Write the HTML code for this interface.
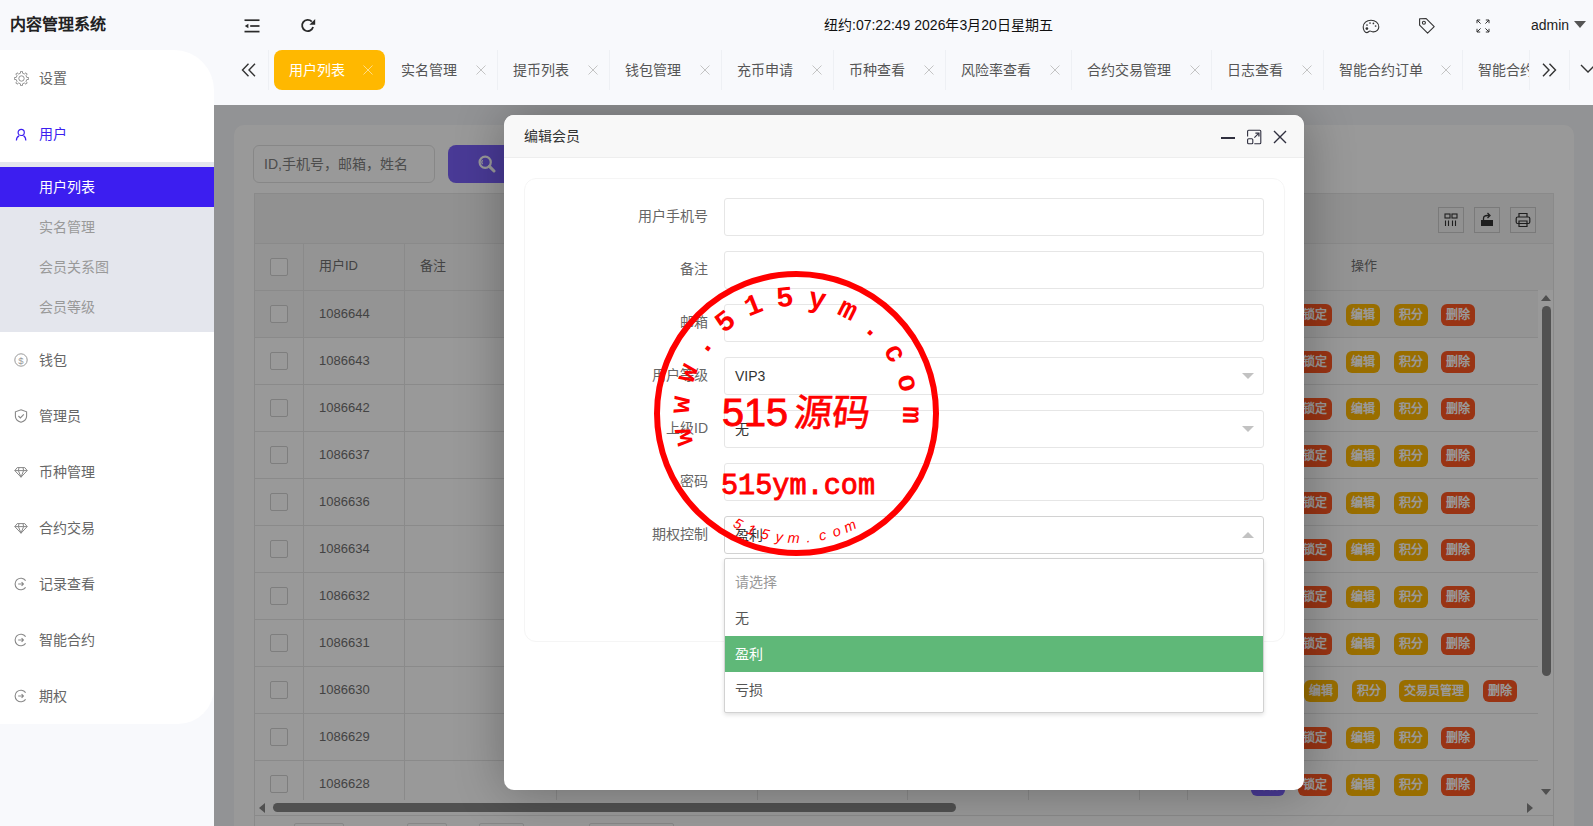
<!DOCTYPE html>
<html lang="zh-CN"><head><meta charset="utf-8">
<style>
*{margin:0;padding:0;box-sizing:border-box}
html,body{width:1593px;height:826px;overflow:hidden}
body{position:relative;background:#f8f9fc;font-family:"Liberation Sans",sans-serif;font-size:14px;color:#333}
.abs{position:absolute}
/* header */
#logo{left:10px;top:14.5px;font-size:16px;font-weight:bold;color:#222;line-height:20px;white-space:nowrap}
#date{left:824px;top:15px;line-height:20px;color:#111;white-space:nowrap}
#admin{left:1531px;top:15px;line-height:20px;color:#222}
/* sidebar */
#side{left:0;top:50px;width:214px;height:674px;background:#fff;border-radius:0 40px 36px 0}
.mi{position:absolute;left:0;width:214px;height:56px;line-height:56px;color:#666;white-space:nowrap}
.mi span{position:absolute;left:39px;top:0}
.mi svg{position:absolute;left:14px;top:21px}
#sub{position:absolute;left:0;top:112px;width:214px;height:170px;background:#e4e6ed}
.si{position:absolute;left:0;width:214px;height:40px;line-height:40px;color:#999;padding-left:39px;white-space:nowrap}
.si.on{background:#3c1ef0;color:#fff}
/* tabs */
.tab{position:absolute;top:50px;height:40px;line-height:40px;color:#555;white-space:nowrap}
.tab .t{position:absolute;left:15px;top:0}
.tab .x{position:absolute;right:12px;top:15px;color:#c4c4c4}
.tab .sep{position:absolute;right:0;top:0;width:1px;height:40px;background:#eef0f4}
.tab.on{background:#ffb800;color:#fff;border-radius:8px}
.tab.on .x{color:#ffdc85}

#frame{position:absolute;left:0;top:0;width:1593px;height:826px;clip-path:inset(105px 0 0 214px);background:transparent}
#fbg{left:214px;top:105px;width:1379px;height:721px;background:#f4f5f8}
#card{left:234px;top:125px;width:1340px;height:760px;background:#fff;border-radius:10px}
#sinput{left:253px;top:145px;width:182px;height:38px;border:1px solid #e2e2e2;border-radius:6px;color:#808080;padding-left:10px;line-height:36px;white-space:nowrap}
#sbtn{left:448px;top:145px;width:78px;height:38px;background:#7b62fb;border-radius:8px}
.tb{position:absolute;border:1px solid #e6e6e6}
.row{position:absolute;left:255px;width:1283px;height:47px;border-top:1px solid #e6e6e6}
.cb{position:absolute;left:270px;width:18px;height:18px;border:1px solid #d2d2d2;border-radius:2px;background:#fff}
.id{position:absolute;left:319px;font-size:13px;color:#707070;line-height:22px}
.vl{position:absolute;width:1px;background:#e6e6e6}
.ab{position:absolute;height:22px;line-height:22px;border-radius:6px;color:#fff;font-size:12px;font-weight:bold;text-align:center;white-space:nowrap}
.ab.r{background:#ff5722}.ab.y{background:#ffb800}.ab.p{background:#7b62fb}
#shade{left:214px;top:105px;width:1379px;height:721px;background:rgba(0,0,0,.4)}

#modal{left:504px;top:115px;width:800px;height:675px;background:#fff;border-radius:10px;box-shadow:1px 1px 50px rgba(0,0,0,.3);overflow:hidden}
#mtitle{position:absolute;left:0;top:0;width:800px;height:43px;background:#f8f8f8;border-bottom:1px solid #eee;line-height:42px;padding-left:20px;color:#333}
#fcard{position:absolute;left:20px;top:63px;width:761px;height:464px;border:1px solid #f5f5f5;border-radius:12px}
.lab{position:absolute;width:200px;left:508px;text-align:right;color:#666;line-height:20px;white-space:nowrap}
.inp{position:absolute;left:724px;width:540px;height:38px;border:1px solid #e6e6e6;border-radius:3px;background:#fff;line-height:36px;padding-left:10px;color:#333}
.arr{position:absolute;left:1242px;width:12px;height:6px}
#dd{left:724px;top:558px;width:540px;height:155px;border:1px solid #d2d2d2;border-radius:2px;background:#fff;box-shadow:0 2px 4px rgba(0,0,0,.12);padding-top:5px}
.op{height:36px;line-height:36px;padding-left:10px;color:#555;white-space:nowrap}
</style></head>
<body>
<!-- HEADER -->
<div id="logo" class="abs">内容管理系统</div>
<svg class="abs" style="left:244px;top:19px" width="16" height="14" viewBox="0 0 16 14"><g stroke="#2a2a2a" stroke-width="1.7"><line x1="0.5" y1="1.2" x2="15.5" y2="1.2"/><line x1="6.2" y1="7" x2="15.5" y2="7"/><line x1="0.5" y1="12.6" x2="15.5" y2="12.6"/></g><path d="M0.8 7 L4.4 4.7 L4.4 9.3Z" fill="#2a2a2a"/></svg>
<svg class="abs" style="left:300px;top:18px" width="16" height="16" viewBox="0 0 16 16"><path d="M13.1 9A5.6 5.6 0 1 1 11.8 3.6" fill="none" stroke="#2a2a2a" stroke-width="1.8"/><path d="M15.2 1 L15.2 6.8 L9.4 6.8Z" fill="#2a2a2a"/></svg>
<div id="date" class="abs">纽约:07:22:49 2026年3月20日星期五</div>

<svg class="abs" style="left:1362px;top:19px" width="18" height="15" viewBox="0 0 18 15"><path d="M9 1.2C4.6 1.2 1.2 4.2 1.2 8c0 3.2 1.8 5.6 3.6 5.6 1.6 0 1.9-1.6 3.2-1.6 1.1 0 1.6 0.9 3.3 0.9 3.3 0 5.5-2.4 5.5-4.9C16.8 4.2 13.4 1.2 9 1.2z" fill="none" stroke="#333" stroke-width="1.1"/><circle cx="4.9" cy="9.6" r="1.35" fill="#333"/><circle cx="5" cy="6" r="0.85" fill="#333"/><circle cx="8" cy="4" r="0.85" fill="#333"/><circle cx="11.4" cy="4.4" r="0.85" fill="#333"/><circle cx="13.6" cy="7" r="0.85" fill="#333"/></svg>
<svg class="abs" style="left:1418px;top:17px" width="18" height="18" viewBox="0 0 18 18"><path d="M1.6 1.8 L8.2 1.6 L16.2 9.6 L9.6 16.2 L1.6 8.2Z" fill="none" stroke="#333" stroke-width="1.1" stroke-linejoin="round"/><circle cx="5.9" cy="5.8" r="1.5" fill="none" stroke="#333" stroke-width="1.1"/></svg>
<svg class="abs" style="left:1476px;top:19px" width="14" height="14" viewBox="0 0 14 14"><g fill="none" stroke="#333" stroke-width="1"><path d="M1 4.2V1h3.2M1 1l3.6 3.6"/><path d="M13 4.2V1H9.8M13 1L9.4 4.6"/><path d="M1 9.8V13h3.2M1 13l3.6-3.6"/><path d="M13 9.8V13H9.8M13 13L9.4 9.4"/></g></svg>
<div id="admin" class="abs">admin</div>
<svg class="abs" style="left:1574px;top:21px" width="12" height="7" viewBox="0 0 12 7"><path d="M0 0H12L6 7Z" fill="#555"/></svg>

<!-- SIDEBAR -->
<div id="side" class="abs">
  <div class="mi" style="top:0"><svg width="15" height="15" viewBox="0 0 14.5 14.5" style="left:14px;top:21px"><path d="M6.19 2.16 L6.39 0.30 L8.11 0.30 L8.31 2.16 L10.10 2.90 L11.55 1.73 L12.77 2.95 L11.60 4.40 L12.34 6.19 L14.20 6.39 L14.20 8.11 L12.34 8.31 L11.60 10.10 L12.77 11.55 L11.55 12.77 L10.10 11.60 L8.31 12.34 L8.11 14.20 L6.39 14.20 L6.19 12.34 L4.40 11.60 L2.95 12.77 L1.73 11.55 L2.90 10.10 L2.16 8.31 L0.30 8.11 L0.30 6.39 L2.16 6.19 L2.90 4.40 L1.73 2.95 L2.95 1.73 L4.40 2.90Z" fill="none" stroke="#8a8a8a" stroke-width="0.9" stroke-linejoin="round"/><circle cx="7.25" cy="7.25" r="2.6" fill="none" stroke="#8a8a8a" stroke-width="0.9"/></svg><span>设置</span></div>
  <div class="mi" style="top:56px;color:#3c1ef0"><svg width="14" height="14" viewBox="0 0 14 14" style="left:15px;top:22px"><circle cx="6.2" cy="4.4" r="3.1" fill="none" stroke="#3c1ef0" stroke-width="1.2"/><path d="M1.4 12.6C1.4 10.4 2.4 8.7 4.1 7.9M8.6 7.9C9.8 8.5 10.8 10.3 10.8 12.6" fill="none" stroke="#3c1ef0" stroke-width="1.2"/></svg><span>用户</span></div>
  <div id="sub">
    <div class="si on" style="top:5px">用户列表</div>
    <div class="si" style="top:45px">实名管理</div>
    <div class="si" style="top:85px">会员关系图</div>
    <div class="si" style="top:125px">会员等级</div>
  </div>
  <div class="mi" style="top:282px"><svg width="14" height="14" viewBox="0 0 14 14"><circle cx="7" cy="7" r="6.2" fill="none" stroke="#999" stroke-width="1"/><text x="7" y="10.6" font-size="9.5" text-anchor="middle" fill="#999" font-family="Liberation Sans">$</text></svg><span>钱包</span></div>
  <div class="mi" style="top:338px"><svg width="14" height="14" viewBox="0 0 14 14"><path d="M7 0.8L12.6 2.8V7.2C12.6 10 10.2 12.2 7 13.3 3.8 12.2 1.4 10 1.4 7.2V2.8Z" fill="none" stroke="#888" stroke-width="1.1"/><path d="M4.4 7l2 2 3.4-3.6" fill="none" stroke="#888" stroke-width="1.1"/></svg><span>管理员</span></div>
  <div class="mi" style="top:394px"><svg width="14" height="14" viewBox="0 0 14 14"><path d="M3.2 2.6H10.8L13.2 5.6L7 12.2L.8 5.6Z M.8 5.6H13.2 M5 2.6L4.4 5.6L7 12.2L9.6 5.6L9 2.6" fill="none" stroke="#888" stroke-width="1" stroke-linejoin="round"/></svg><span>币种管理</span></div>
  <div class="mi" style="top:450px"><svg width="14" height="14" viewBox="0 0 14 14"><path d="M3.2 2.6H10.8L13.2 5.6L7 12.2L.8 5.6Z M.8 5.6H13.2 M5 2.6L4.4 5.6L7 12.2L9.6 5.6L9 2.6" fill="none" stroke="#888" stroke-width="1" stroke-linejoin="round"/></svg><span>合约交易</span></div>
  <div class="mi" style="top:506px"><svg width="14" height="14" viewBox="0 0 14 14"><path d="M11.6 3.6A5.8 5.8 0 1 0 11.6 10.4" fill="none" stroke="#888" stroke-width="1.1"/><path d="M4.2 7H9.4M7.6 5.2L9.4 7L7.6 8.8" fill="none" stroke="#888" stroke-width="1.1"/></svg><span>记录查看</span></div>
  <div class="mi" style="top:562px"><svg width="14" height="14" viewBox="0 0 14 14"><path d="M11.6 3.6A5.8 5.8 0 1 0 11.6 10.4" fill="none" stroke="#888" stroke-width="1.1"/><path d="M4.2 7H9.4M7.6 5.2L9.4 7L7.6 8.8" fill="none" stroke="#888" stroke-width="1.1"/></svg><span>智能合约</span></div>
  <div class="mi" style="top:618px"><svg width="14" height="14" viewBox="0 0 14 14"><path d="M11.6 3.6A5.8 5.8 0 1 0 11.6 10.4" fill="none" stroke="#888" stroke-width="1.1"/><path d="M4.2 7H9.4M7.6 5.2L9.4 7L7.6 8.8" fill="none" stroke="#888" stroke-width="1.1"/></svg><span>期权</span></div>
</div>

<!-- TABS -->
<svg class="abs" style="left:241px;top:63px" width="16" height="14" viewBox="0 0 16 14"><path d="M7.5 0.8L1.5 7L7.5 13.2M14 0.8L8 7L14 13.2" fill="none" stroke="#333" stroke-width="1.4"/></svg>
<div class="abs" style="left:268px;top:50px;width:1px;height:40px;background:#eef0f4"></div>
<div class="tab on" style="left:274px;width:111px"><span class="t">用户列表</span><svg class="x" width="10" height="10" viewBox="0 0 10 10"><path d="M0.5 0.5L9.5 9.5M9.5 0.5L0.5 9.5" stroke="currentColor" stroke-width="1"/></svg></div>
<div class="tab" style="left:386px;width:112px"><span class="t">实名管理</span><svg class="x" width="10" height="10" viewBox="0 0 10 10"><path d="M0.5 0.5L9.5 9.5M9.5 0.5L0.5 9.5" stroke="currentColor" stroke-width="1"/></svg><i class="sep"></i></div>
<div class="tab" style="left:498px;width:112px"><span class="t">提币列表</span><svg class="x" width="10" height="10" viewBox="0 0 10 10"><path d="M0.5 0.5L9.5 9.5M9.5 0.5L0.5 9.5" stroke="currentColor" stroke-width="1"/></svg><i class="sep"></i></div>
<div class="tab" style="left:610px;width:112px"><span class="t">钱包管理</span><svg class="x" width="10" height="10" viewBox="0 0 10 10"><path d="M0.5 0.5L9.5 9.5M9.5 0.5L0.5 9.5" stroke="currentColor" stroke-width="1"/></svg><i class="sep"></i></div>
<div class="tab" style="left:722px;width:112px"><span class="t">充币申请</span><svg class="x" width="10" height="10" viewBox="0 0 10 10"><path d="M0.5 0.5L9.5 9.5M9.5 0.5L0.5 9.5" stroke="currentColor" stroke-width="1"/></svg><i class="sep"></i></div>
<div class="tab" style="left:834px;width:112px"><span class="t">币种查看</span><svg class="x" width="10" height="10" viewBox="0 0 10 10"><path d="M0.5 0.5L9.5 9.5M9.5 0.5L0.5 9.5" stroke="currentColor" stroke-width="1"/></svg><i class="sep"></i></div>
<div class="tab" style="left:946px;width:126px"><span class="t">风险率查看</span><svg class="x" width="10" height="10" viewBox="0 0 10 10"><path d="M0.5 0.5L9.5 9.5M9.5 0.5L0.5 9.5" stroke="currentColor" stroke-width="1"/></svg><i class="sep"></i></div>
<div class="tab" style="left:1072px;width:140px"><span class="t">合约交易管理</span><svg class="x" width="10" height="10" viewBox="0 0 10 10"><path d="M0.5 0.5L9.5 9.5M9.5 0.5L0.5 9.5" stroke="currentColor" stroke-width="1"/></svg><i class="sep"></i></div>
<div class="tab" style="left:1212px;width:112px"><span class="t">日志查看</span><svg class="x" width="10" height="10" viewBox="0 0 10 10"><path d="M0.5 0.5L9.5 9.5M9.5 0.5L0.5 9.5" stroke="currentColor" stroke-width="1"/></svg><i class="sep"></i></div>
<div class="tab" style="left:1324px;width:139px"><span class="t">智能合约订单</span><svg class="x" width="10" height="10" viewBox="0 0 10 10"><path d="M0.5 0.5L9.5 9.5M9.5 0.5L0.5 9.5" stroke="currentColor" stroke-width="1"/></svg><i class="sep"></i></div>
<div class="tab" style="left:1463px;width:67px;overflow:hidden"><span class="t">智能合约交易</span><i class="sep"></i></div>
<svg class="abs" style="left:1541px;top:63px" width="16" height="14" viewBox="0 0 16 14"><path d="M2 0.8L8 7L2 13.2M8.5 0.8L14.5 7L8.5 13.2" fill="none" stroke="#333" stroke-width="1.4"/></svg>
<div class="abs" style="left:1569px;top:50px;width:1px;height:40px;background:#eef0f4"></div>
<svg class="abs" style="left:1580px;top:64px" width="16" height="10" viewBox="0 0 16 10"><path d="M1 1L8 8L15 1" fill="none" stroke="#333" stroke-width="1.4"/></svg>

<div id="frame">
<div id="fbg" class="abs"></div>
<div id="card" class="abs"></div>
<div id="sinput" class="abs">ID,手机号，邮箱，姓名</div>
<div id="sbtn" class="abs"><svg style="position:absolute;left:30px;top:10px" width="18" height="18" viewBox="0 0 18 18"><circle cx="7.2" cy="7.2" r="5.6" fill="none" stroke="#fff" stroke-width="2.2"/><path d="M11.4 11.4L16 16" stroke="#fff" stroke-width="3" stroke-linecap="round"/><path d="M4.6 5.2A3 3 0 0 0 4.6 9.2" fill="none" stroke="#fff" stroke-width="1.1"/></svg></div>
<div class="abs" style="left:254px;top:193px;width:1300px;height:640px;border:1px solid #e6e6e6;background:#fff"></div>
<div class="abs" style="left:255px;top:194px;width:1298px;height:49px;background:#f2f2f2"></div>
<div class="abs" style="left:255px;top:243px;width:1298px;height:47px;background:#f7f7f7;border-top:1px solid #e6e6e6"></div>
<div class="abs" style="left:1438px;top:207px;width:26px;height:26px;border:1px solid #ccc"></div>
<div class="abs" style="left:1474px;top:207px;width:26px;height:26px;border:1px solid #ccc"></div>
<div class="abs" style="left:1510px;top:207px;width:26px;height:26px;border:1px solid #ccc"></div>
<svg class="abs" style="left:1444px;top:213px" width="14" height="14" viewBox="0 0 14 14"><g fill="none" stroke="#333" stroke-width="1.1"><rect x="1" y="1" width="5" height="4"/><rect x="8" y="1" width="5" height="4"/><path d="M1.5 7.5V13M4.5 7.5V13M8.5 7.5V13M11.5 7.5V13"/></g></svg>
<svg class="abs" style="left:1480px;top:212px" width="14" height="15" viewBox="0 0 14 15"><path d="M1 8H13V14H1Z" fill="#333"/><path d="M3.5 8V6.5C3.5 4.5 5 3.5 7.5 3.5H9M7.5 1L10 3.5L7.5 6" fill="none" stroke="#333" stroke-width="1.3"/></svg>
<svg class="abs" style="left:1515px;top:212px" width="16" height="16" viewBox="0 0 16 16"><g fill="none" stroke="#333" stroke-width="1.2"><path d="M4 5V1.5H12V5"/><rect x="1.2" y="5" width="13.6" height="6.5" rx="1.5"/><path d="M4 9H12V14.5H4Z"/></g></svg>
<div class="cb abs" style="top:258px"></div>
<div class="id" style="top:255px">用户ID</div>
<div class="id" style="left:420px;top:255px">备注</div>
<div class="id" style="left:1351px;top:255px">操作</div>
<div class="row" style="top:290px;background:#f7f7f7"></div>
<div class="cb" style="top:305px"></div>
<div class="id" style="top:303px">1086644</div>
<div class="ab p" style="left:1251px;top:304px;width:34px">详情</div>
<div class="ab r" style="left:1298px;top:304px;width:34px">锁定</div>
<div class="ab y" style="left:1346px;top:304px;width:34px">编辑</div>
<div class="ab y" style="left:1394px;top:304px;width:34px">积分</div>
<div class="ab r" style="left:1441px;top:304px;width:34px">删除</div>
<div class="row" style="top:337px;background:#fff"></div>
<div class="cb" style="top:352px"></div>
<div class="id" style="top:350px">1086643</div>
<div class="ab p" style="left:1251px;top:351px;width:34px">详情</div>
<div class="ab r" style="left:1298px;top:351px;width:34px">锁定</div>
<div class="ab y" style="left:1346px;top:351px;width:34px">编辑</div>
<div class="ab y" style="left:1394px;top:351px;width:34px">积分</div>
<div class="ab r" style="left:1441px;top:351px;width:34px">删除</div>
<div class="row" style="top:384px;background:#fff"></div>
<div class="cb" style="top:399px"></div>
<div class="id" style="top:397px">1086642</div>
<div class="ab p" style="left:1251px;top:398px;width:34px">详情</div>
<div class="ab r" style="left:1298px;top:398px;width:34px">锁定</div>
<div class="ab y" style="left:1346px;top:398px;width:34px">编辑</div>
<div class="ab y" style="left:1394px;top:398px;width:34px">积分</div>
<div class="ab r" style="left:1441px;top:398px;width:34px">删除</div>
<div class="row" style="top:431px;background:#fff"></div>
<div class="cb" style="top:446px"></div>
<div class="id" style="top:444px">1086637</div>
<div class="ab p" style="left:1251px;top:445px;width:34px">详情</div>
<div class="ab r" style="left:1298px;top:445px;width:34px">锁定</div>
<div class="ab y" style="left:1346px;top:445px;width:34px">编辑</div>
<div class="ab y" style="left:1394px;top:445px;width:34px">积分</div>
<div class="ab r" style="left:1441px;top:445px;width:34px">删除</div>
<div class="row" style="top:478px;background:#fff"></div>
<div class="cb" style="top:493px"></div>
<div class="id" style="top:491px">1086636</div>
<div class="ab p" style="left:1251px;top:492px;width:34px">详情</div>
<div class="ab r" style="left:1298px;top:492px;width:34px">锁定</div>
<div class="ab y" style="left:1346px;top:492px;width:34px">编辑</div>
<div class="ab y" style="left:1394px;top:492px;width:34px">积分</div>
<div class="ab r" style="left:1441px;top:492px;width:34px">删除</div>
<div class="row" style="top:525px;background:#fff"></div>
<div class="cb" style="top:540px"></div>
<div class="id" style="top:538px">1086634</div>
<div class="ab p" style="left:1251px;top:539px;width:34px">详情</div>
<div class="ab r" style="left:1298px;top:539px;width:34px">锁定</div>
<div class="ab y" style="left:1346px;top:539px;width:34px">编辑</div>
<div class="ab y" style="left:1394px;top:539px;width:34px">积分</div>
<div class="ab r" style="left:1441px;top:539px;width:34px">删除</div>
<div class="row" style="top:572px;background:#fff"></div>
<div class="cb" style="top:587px"></div>
<div class="id" style="top:585px">1086632</div>
<div class="ab p" style="left:1251px;top:586px;width:34px">详情</div>
<div class="ab r" style="left:1298px;top:586px;width:34px">锁定</div>
<div class="ab y" style="left:1346px;top:586px;width:34px">编辑</div>
<div class="ab y" style="left:1394px;top:586px;width:34px">积分</div>
<div class="ab r" style="left:1441px;top:586px;width:34px">删除</div>
<div class="row" style="top:619px;background:#fff"></div>
<div class="cb" style="top:634px"></div>
<div class="id" style="top:632px">1086631</div>
<div class="ab p" style="left:1251px;top:633px;width:34px">详情</div>
<div class="ab r" style="left:1298px;top:633px;width:34px">锁定</div>
<div class="ab y" style="left:1346px;top:633px;width:34px">编辑</div>
<div class="ab y" style="left:1394px;top:633px;width:34px">积分</div>
<div class="ab r" style="left:1441px;top:633px;width:34px">删除</div>
<div class="row" style="top:666px;background:#fff"></div>
<div class="cb" style="top:681px"></div>
<div class="id" style="top:679px">1086630</div>
<div class="ab y" style="left:1304px;top:680px;width:34px">编辑</div>
<div class="ab y" style="left:1352px;top:680px;width:34px">积分</div>
<div class="ab y" style="left:1399px;top:680px;width:70px">交易员管理</div>
<div class="ab r" style="left:1483px;top:680px;width:34px">删除</div>
<div class="row" style="top:713px;background:#fff"></div>
<div class="cb" style="top:728px"></div>
<div class="id" style="top:726px">1086629</div>
<div class="ab p" style="left:1251px;top:727px;width:34px">详情</div>
<div class="ab r" style="left:1298px;top:727px;width:34px">锁定</div>
<div class="ab y" style="left:1346px;top:727px;width:34px">编辑</div>
<div class="ab y" style="left:1394px;top:727px;width:34px">积分</div>
<div class="ab r" style="left:1441px;top:727px;width:34px">删除</div>
<div class="row" style="top:760px;background:#fff"></div>
<div class="cb" style="top:775px"></div>
<div class="id" style="top:773px">1086628</div>
<div class="ab p" style="left:1251px;top:774px;width:34px">详情</div>
<div class="ab r" style="left:1298px;top:774px;width:34px">锁定</div>
<div class="ab y" style="left:1346px;top:774px;width:34px">编辑</div>
<div class="ab y" style="left:1394px;top:774px;width:34px">积分</div>
<div class="ab r" style="left:1441px;top:774px;width:34px">删除</div>
<div class="vl" style="left:303px;top:243px;height:557px"></div>
<div class="vl" style="left:404px;top:243px;height:557px"></div>
<div class="vl" style="left:556px;top:243px;height:557px"></div>
<div class="vl" style="left:757px;top:243px;height:557px"></div>
<div class="vl" style="left:907px;top:243px;height:557px"></div>
<div class="vl" style="left:1028px;top:243px;height:557px"></div>
<div class="vl" style="left:1139px;top:243px;height:557px"></div>
<div class="vl" style="left:1187px;top:243px;height:557px"></div>
<div class="abs" style="left:1538px;top:290px;width:15px;height:510px;background:#fff"></div>
<div class="abs" style="left:1542px;top:306px;width:9px;height:370px;background:#888;border-radius:5px"></div>
<svg class="abs" style="left:1541px;top:295px" width="10" height="6"><path d="M0 6H10L5 0Z" fill="#858585"/></svg>
<svg class="abs" style="left:1541px;top:789px" width="10" height="6"><path d="M0 0H10L5 6Z" fill="#858585"/></svg>
<div class="abs" style="left:255px;top:800px;width:1298px;height:15px;background:#fff"></div>
<div class="abs" style="left:273px;top:803px;width:683px;height:9px;background:#888;border-radius:5px"></div>
<svg class="abs" style="left:259px;top:803px" width="6" height="10"><path d="M6 0V10L0 5Z" fill="#858585"/></svg>
<svg class="abs" style="left:1527px;top:803px" width="6" height="10"><path d="M0 0V10L6 5Z" fill="#858585"/></svg>
<div class="abs" style="left:255px;top:815px;width:1298px;height:1px;background:#e6e6e6"></div>
<div class="abs" style="left:294px;top:823px;width:50px;height:30px;border:1px solid #e2e2e2;border-radius:2px"></div>
<div class="abs" style="left:407px;top:823px;width:40px;height:30px;border:1px solid #e2e2e2;border-radius:2px"></div>
<div class="abs" style="left:479px;top:823px;width:45px;height:30px;border:1px solid #e2e2e2;border-radius:2px"></div>
<div class="abs" style="left:589px;top:823px;width:85px;height:30px;border:1px solid #e2e2e2;border-radius:2px"></div>
<div id="shade" class="abs"></div>
</div>
<div class="abs" style="left:0;top:0;width:1593px;height:826px;clip-path:inset(105px 0 0 214px)"><div id="modal" class="abs"><div id="mtitle">编辑会员</div><div id="fcard"></div></div></div>
<div class="abs" style="left:1221px;top:137px;width:14px;height:2px;background:#2f2f3f"></div>
<svg class="abs" style="left:1246px;top:129px" width="16" height="16" viewBox="0 0 16 16"><g fill="none" stroke="#2f2f3f" stroke-width="1.1"><path d="M1.6 7.6V2.3Q1.6 1.3 2.6 1.3H13.8Q14.8 1.3 14.8 2.3V13.8Q14.8 14.8 13.8 14.8H8.3"/><rect x="1.6" y="9.7" width="5.2" height="5.1" rx="1"/><path d="M8.4 8.6L12.6 4.4"/></g><path d="M9.4 4.1H12.9V7.6" fill="none" stroke="#2f2f3f" stroke-width="1.3"/></svg>
<svg class="abs" style="left:1273px;top:130px" width="14" height="14" viewBox="0 0 14 14"><path d="M1 1L13 13M13 1L1 13" stroke="#2f2f3f" stroke-width="1.4"/></svg>
<div class="lab" style="top:206px">用户手机号</div>
<div class="inp" style="top:198px;border-color:#e6e6e6"></div>
<div class="lab" style="top:259px">备注</div>
<div class="inp" style="top:251px;border-color:#e6e6e6"></div>
<div class="lab" style="top:312px">邮箱</div>
<div class="inp" style="top:304px;border-color:#e6e6e6"></div>
<div class="lab" style="top:365px">用户等级</div>
<div class="inp" style="top:357px;border-color:#e6e6e6">VIP3</div>
<svg class="arr" style="top:373px" viewBox="0 0 12 6"><path d="M0 0H12L6 6Z" fill="#c2c2c2"/></svg>
<div class="lab" style="top:418px">上级ID</div>
<div class="inp" style="top:410px;border-color:#e6e6e6">无</div>
<svg class="arr" style="top:426px" viewBox="0 0 12 6"><path d="M0 0H12L6 6Z" fill="#c2c2c2"/></svg>
<div class="lab" style="top:471px">密码</div>
<div class="inp" style="top:463px;border-color:#e6e6e6"></div>
<div class="lab" style="top:524px">期权控制</div>
<div class="inp" style="top:516px;border-color:#d2d2d2">盈利</div>
<svg class="arr" style="top:532px" viewBox="0 0 12 6"><path d="M0 6H12L6 0Z" fill="#c2c2c2"/></svg>
<div id="dd" class="abs"><div class="op" style="color:#999">请选择</div><div class="op">无</div><div class="op" style="background:#5fb878;color:#fff">盈利</div><div class="op">亏损</div></div>
<svg class="abs" style="left:0;top:0" width="1593" height="826" viewBox="0 0 1593 826">
<circle cx="796.5" cy="413.5" r="139.5" fill="none" stroke="#f00" stroke-width="6"/>
<text x="796" y="306" transform="rotate(-102.0 796 413)" text-anchor="middle" font-family="Liberation Mono" font-weight="bold" font-size="29" fill="#f00">w</text>
<text x="796" y="306" transform="rotate(-85.9 796 413)" text-anchor="middle" font-family="Liberation Mono" font-weight="bold" font-size="29" fill="#f00">w</text>
<text x="796" y="306" transform="rotate(-69.8 796 413)" text-anchor="middle" font-family="Liberation Mono" font-weight="bold" font-size="29" fill="#f00">w</text>
<text x="796" y="306" transform="rotate(-53.8 796 413)" text-anchor="middle" font-family="Liberation Mono" font-weight="bold" font-size="29" fill="#f00">.</text>
<text x="796" y="306" transform="rotate(-37.7 796 413)" text-anchor="middle" font-family="Liberation Mono" font-weight="bold" font-size="29" fill="#f00">5</text>
<text x="796" y="306" transform="rotate(-21.6 796 413)" text-anchor="middle" font-family="Liberation Mono" font-weight="bold" font-size="29" fill="#f00">1</text>
<text x="796" y="306" transform="rotate(-5.5 796 413)" text-anchor="middle" font-family="Liberation Mono" font-weight="bold" font-size="29" fill="#f00">5</text>
<text x="796" y="306" transform="rotate(10.6 796 413)" text-anchor="middle" font-family="Liberation Mono" font-weight="bold" font-size="29" fill="#f00">y</text>
<text x="796" y="306" transform="rotate(26.7 796 413)" text-anchor="middle" font-family="Liberation Mono" font-weight="bold" font-size="29" fill="#f00">m</text>
<text x="796" y="306" transform="rotate(42.8 796 413)" text-anchor="middle" font-family="Liberation Mono" font-weight="bold" font-size="29" fill="#f00">.</text>
<text x="796" y="306" transform="rotate(58.8 796 413)" text-anchor="middle" font-family="Liberation Mono" font-weight="bold" font-size="29" fill="#f00">c</text>
<text x="796" y="306" transform="rotate(74.9 796 413)" text-anchor="middle" font-family="Liberation Mono" font-weight="bold" font-size="29" fill="#f00">o</text>
<text x="796" y="306" transform="rotate(91.0 796 413)" text-anchor="middle" font-family="Liberation Mono" font-weight="bold" font-size="29" fill="#f00">m</text>
<text x="722" y="426" font-family="Liberation Sans" font-size="38" textLength="66" lengthAdjust="spacingAndGlyphs" fill="#f00" stroke="#f00" stroke-width="0.9">515</text>
<text x="793" y="426" font-family="Liberation Sans" font-size="38" fill="#f00" transform="skewX(-6) translate(45 0)" stroke="#f00" stroke-width="0.6">源码</text>
<text x="721" y="494" font-family="Liberation Mono" font-size="29" stroke="#f00" stroke-width="0.9" textLength="154" lengthAdjust="spacingAndGlyphs" fill="#f00">515ym.com</text>
<text x="796" y="543" transform="rotate(27.6 796 413)" text-anchor="middle" font-family="Liberation Sans" font-style="italic" font-size="14.5" fill="#f00">5</text>
<text x="796" y="543" transform="rotate(21.0 796 413)" text-anchor="middle" font-family="Liberation Sans" font-style="italic" font-size="14.5" fill="#f00">1</text>
<text x="796" y="543" transform="rotate(14.3 796 413)" text-anchor="middle" font-family="Liberation Sans" font-style="italic" font-size="14.5" fill="#f00">5</text>
<text x="796" y="543" transform="rotate(7.7 796 413)" text-anchor="middle" font-family="Liberation Sans" font-style="italic" font-size="14.5" fill="#f00">y</text>
<text x="796" y="543" transform="rotate(1.1 796 413)" text-anchor="middle" font-family="Liberation Sans" font-style="italic" font-size="14.5" fill="#f00">m</text>
<text x="796" y="543" transform="rotate(-5.6 796 413)" text-anchor="middle" font-family="Liberation Sans" font-style="italic" font-size="14.5" fill="#f00">.</text>
<text x="796" y="543" transform="rotate(-12.2 796 413)" text-anchor="middle" font-family="Liberation Sans" font-style="italic" font-size="14.5" fill="#f00">c</text>
<text x="796" y="543" transform="rotate(-18.9 796 413)" text-anchor="middle" font-family="Liberation Sans" font-style="italic" font-size="14.5" fill="#f00">o</text>
<text x="796" y="543" transform="rotate(-25.5 796 413)" text-anchor="middle" font-family="Liberation Sans" font-style="italic" font-size="14.5" fill="#f00">m</text>
</svg>
</body></html>
